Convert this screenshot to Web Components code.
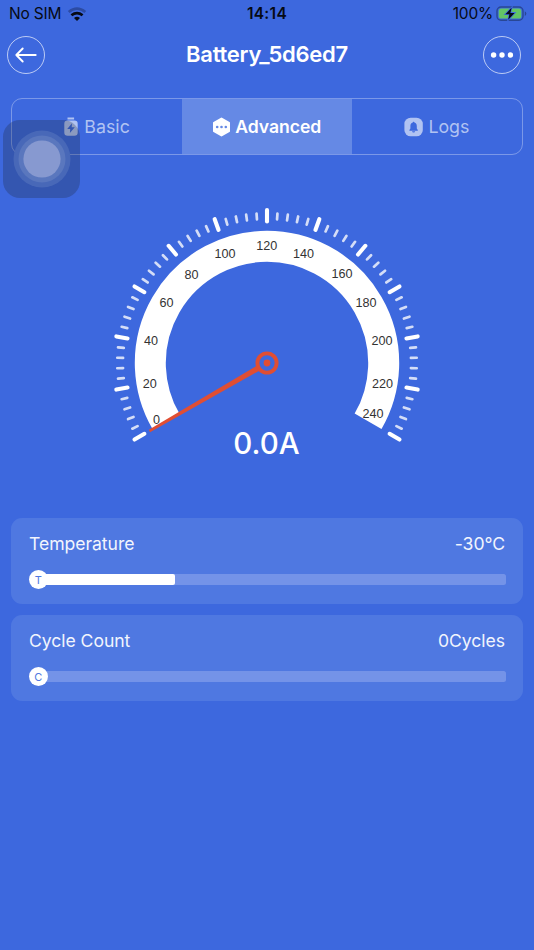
<!DOCTYPE html>
<html lang="en">
<head>
<meta charset="utf-8">
<title>Battery</title>
<style>
    html, body {
        margin: 0;
        height: 100%;
        background: #3d68de;
    }
    body {
        font-family: Inter, "Liberation Sans", sans-serif;
        color: #fff;
        overflow: hidden;
    }
</style>
</head>
<body>
<battery-page></battery-page>

<script>
function define(name, html, setup) {
    const template = document.createElement("template");
    template.innerHTML = html;
    customElements.define(name, class extends HTMLElement {
        constructor() {
            super();
            this.attachShadow({ mode: "open" });
            this.shadowRoot.appendChild(template.content.cloneNode(true));
        }
        connectedCallback() {
            if (setup) setup(this, this.shadowRoot);
        }
    });
}

define("status-bar", `
<style>
    :host {
        display: grid;
        grid-template-columns: 1fr auto 1fr;
        align-items: center;
        height: 28px;
        padding: 0 7px 0 9px;
        color: #060a14;
        font-size: 15.5px;
        line-height: 28px;
    }
    .left, .right { display: flex; align-items: center; }
    .left { gap: 6px; letter-spacing: -0.2px; }
    .right { justify-content: flex-end; gap: 3px; letter-spacing: -0.2px; }
    .time { position: relative; left: -1px; font-weight: 600; letter-spacing: 0.3px; }
    svg { display: block; }
</style>
<div class="left">
    <span>No SIM</span>
    <svg width="20" height="15" viewBox="0 0 20 15">
        <path d="M1.7 5Q10-1.8 18.3 5" fill="none" stroke="#2c4ba3" stroke-width="2.7"/>
        <path d="M4.4 8.3Q10 4 15.6 8.3" fill="none" stroke="#060a14" stroke-width="2.7"/>
        <path d="M7 10.9Q10 8.5 13 10.9L10 13.9z" fill="#060a14"/>
    </svg>
</div>
<span class="time">14:14</span>
<div class="right">
    <span>100%</span>
    <svg width="31" height="16" viewBox="0 0 31 16">
        <rect x="1" y="1" width="26" height="13.2" rx="4" fill="none" stroke="#284795" stroke-width="1.4"/>
        <path d="M28.8 5.2v4.8q1.5-.6 1.5-2.4t-1.5-2.4z" fill="#284795"/>
        <rect x="2.7" y="2.6" width="22.6" height="10" rx="2.6" fill="#63c466"/>
        <path d="M15.6 1.8L9.4 8.3h4l-1.2 5.5 6.4-6.9h-4.2z" fill="#060a14" stroke="#3d68de" stroke-width="1.6" paint-order="stroke"/>
    </svg>
</div>
`);

define("round-button", `
<style>
    :host {
        display: grid;
        place-items: center;
        box-sizing: border-box;
        width: 38px;
        height: 38px;
        border: 1px solid rgba(255, 255, 255, 0.65);
        border-radius: 50%;
    }
</style>
<slot></slot>
`);

define("nav-header", `
<style>
    :host {
        display: grid;
        grid-template-columns: 41px 1fr 41px;
        align-items: center;
        height: 53px;
        padding: 0 10px 0 7px;
    }
    h1 {
        margin: -2px 0 0 3px;
        font-size: 22px;
        font-weight: 600;
        letter-spacing: -0.25px;
        text-align: center;
    }
    svg { display: block; }
</style>
<round-button>
    <svg width="24" height="18" viewBox="0 0 24 18" fill="none" stroke="#fff" stroke-width="1.9" stroke-linecap="round" stroke-linejoin="round">
        <path d="M21.7 9H2.3M8.7 2.5L2.3 9l6.4 6.5"/>
    </svg>
</round-button>
<h1><slot></slot></h1>
<round-button>
    <svg width="24" height="6" viewBox="0 0 24 6" fill="#fff">
        <circle cx="3.6" cy="3" r="2.7"/><circle cx="12" cy="3" r="2.7"/><circle cx="20.4" cy="3" r="2.7"/>
    </svg>
</round-button>
`);

define("tab-item", `
<style>
    :host {
        display: flex;
        align-items: center;
        justify-content: center;
        gap: 5px;
        font-size: 17.8px;
        color: #b1c3f2;
    }
    :host([active]) {
        gap: 4px;
        background: #6589e5;
        color: #fff;
        font-size: 17.6px;
        font-weight: 600;
        letter-spacing: -0.05px;
    }
    span { margin-top: -1px; }
    ::slotted(svg) { display: block; }
</style>
<slot name="icon"></slot>
<span><slot></slot></span>
`);

define("tab-bar", `
<style>
    :host {
        display: grid;
        grid-template-columns: repeat(3, 1fr);
        box-sizing: border-box;
        height: 57px;
        margin: 17px 11px 0 10.5px;
        border: 1px solid rgba(255, 255, 255, 0.32);
        border-radius: 11px;
        overflow: hidden;
    }
</style>
<slot></slot>
`);

define("amp-gauge", `
<style>
    :host {
        display: block;
        width: 534px;
        height: 310px;
        margin-top: 45px;
    }
    svg { display: block; }
    .labels { font: 12.6px "Liberation Sans", sans-serif; fill: #333; text-anchor: middle; }
    .value { font-size: 29.5px; font-weight: 500; fill: #fff; text-anchor: middle; }
</style>
<svg width="534" height="310" viewBox="0 200 534 310">
    <g class="ticks" stroke="#fff" stroke-linecap="round"></g>
    <path class="ring" fill="none" stroke="#fff" stroke-width="31"/>
    <g class="labels"></g>
    <path d="M148.9 429.7L258 365l3.4-1.6 2.4 4.6-3.6 2.2L150 432.2z" fill="#e04e33"/>
    <circle cx="267" cy="363" r="9.6" fill="#3d68de" stroke="#e04e33" stroke-width="3.9"/>
    <circle cx="267" cy="363" r="3.4" fill="#e04e33"/>
    <text class="value" x="266.5" y="453.7"></text>
</svg>
`, (host, root) => {
    const cx = 267;
    const cy = 363;
    const point = (deg, r) => {
        const a = deg * Math.PI / 180;
        return (cx + Math.sin(a) * r).toFixed(2) + " " + (cy - Math.cos(a) * r).toFixed(2);
    };

    // a long tick every 20 degrees, four short ones between
    let ticks = "";
    for (let deg = -120; deg <= 120; deg += 4) {
        const major = deg % 20 === 0;
        const from = point(deg, major ? 141.6 : 144);
        const to = point(deg, major ? 153 : 149.8);
        ticks += `<path d="M${from}L${to}" stroke-width="${major ? 4.1 : 2.7}" opacity="${major ? 1 : 0.78}"/>`;
    }
    root.querySelector(".ticks").innerHTML = ticks;
    root.querySelector(".ring").setAttribute("d", `M${point(-120, 116.7)}A116.7 116.7 0 1 1 ${point(120, 116.7)}`);

    const labels = [
        [0, 156.5, 420], [20, 149.8, 384], [40, 151, 341], [60, 166.5, 303],
        [80, 191.5, 274.5], [100, 225, 254], [120, 266.7, 245.8], [140, 303.5, 253.5],
        [160, 342, 274], [180, 366, 302.5], [200, 382, 340.5], [220, 382.5, 383.8],
        [240, 373, 413.8]
    ];
    root.querySelector(".labels").innerHTML = labels
        .map(([n, x, y]) => `<text x="${x}" y="${y + 4.4}">${n}</text>`).join("");
    root.querySelector(".value").textContent = host.getAttribute("value");
});

define("stat-card", `
<style>
    :host {
        display: block;
        box-sizing: border-box;
        height: 86px;
        margin: 0 11px;
        padding: 13.5px 18px 0;
        border-radius: 11px;
        background: #4f78e1;
    }
    .row {
        display: flex;
        justify-content: space-between;
        font-size: 17.6px;
        line-height: 26px;
        letter-spacing: -0.05px;
        color: #f2f5fd;
    }
    .bar {
        display: flex;
        align-items: center;
        height: 20px;
        margin: 12.5px -0.5px 0;
    }
    .knob {
        flex: none;
        z-index: 1;
        width: 19.5px;
        height: 19.5px;
        border-radius: 50%;
        background: #fff;
        color: #4f78e1;
        font-size: 11px;
        line-height: 20px;
        text-align: center;
    }
    .track {
        flex: 1;
        height: 10.5px;
        margin-left: -10px;
        border-radius: 2.5px;
        background: #7493e8;
        overflow: hidden;
    }
    .fill {
        height: 100%;
        border-radius: 0 2px 2px 0;
        background: #fff;
    }
</style>
<div class="row"><span><slot></slot></span><span class="value"></span></div>
<div class="bar">
    <div class="knob"></div>
    <div class="track"><div class="fill"></div></div>
</div>
`, (host, root) => {
    root.querySelector(".value").textContent = host.getAttribute("value");
    root.querySelector(".knob").textContent = host.getAttribute("mark");
    root.querySelector(".fill").style.width = host.getAttribute("fill") + "%";
});

define("assistive-touch", `
<style>
    :host {
        position: absolute;
        left: 3px;
        top: 120px;
        display: grid;
        place-items: center;
        width: 77px;
        height: 77.5px;
        border-radius: 17px;
        background: rgba(28, 32, 40, 0.25);
    }
    svg { display: block; }
</style>
<svg width="58" height="58" viewBox="-29 -29 58 58">
    <circle r="28.5" fill="#4868b8"/>
    <circle r="23.5" fill="#5a77be"/>
    <circle r="18.6" fill="#8799d0"/>
</svg>
`);

define("battery-page", `
<style>
    :host { display: block; position: relative; width: 534px; height: 950px; }
    .cards { display: grid; gap: 11px; margin-top: 7.5px; }
</style>
<status-bar></status-bar>
<nav-header>Battery_5d6ed7</nav-header>
<tab-bar>
    <tab-item>
        <svg slot="icon" width="16" height="20" viewBox="0 0 16 20">
            <path d="M4.5.5h6.6v2H4.5zM4.6 3.6h6.8q3.3 0 3.3 3.3v8.6q0 3.3-3.3 3.3H4.6q-3.3 0-3.3-3.3V6.9q0-3.3 3.3-3.3z" fill="#b1c3f2"/>
            <path d="M9 6.3l-4.8 5.8h3L6.9 16l4.9-5.8H8.7z" fill="#3d68de"/>
        </svg>Basic
    </tab-item>
    <tab-item active>
        <svg slot="icon" width="19" height="20" viewBox="0 0 18 20">
            <path d="M9 1.5L16.5 5.8v8.4L9 18.5 1.5 14.2V5.8z" fill="#fff" stroke="#fff" stroke-width="2" stroke-linejoin="round"/>
            <g fill="#6589e5"><circle cx="4.7" cy="10" r="1.3"/><circle cx="9" cy="10" r="1.3"/><circle cx="13.3" cy="10" r="1.3"/></g>
        </svg>Advanced
    </tab-item>
    <tab-item>
        <svg slot="icon" width="19" height="20" viewBox="0 0 19 20">
            <rect x=".4" y=".7" width="18.4" height="18.6" rx="6.3" fill="#b1c3f2"/>
            <path d="M9.6 4.7c.6 0 .8.4.8.8 1.7.4 2.4 1.8 2.4 3.5v2.6l1 1.5v.6H5.4v-.6l1-1.5V9c0-1.7.7-3.1 2.4-3.5 0-.4.2-.8.8-.8zM8 14.3h3.2q-.2 1.2-1.6 1.2T8 14.3z" fill="#3d68de"/>
        </svg>Logs
    </tab-item>
</tab-bar>
<amp-gauge value="0.0A"></amp-gauge>
<div class="cards">
    <stat-card value="-30°C" mark="T" fill="29.2">Temperature</stat-card>
    <stat-card value="0Cycles" mark="C" fill="0">Cycle Count</stat-card>
</div>
<assistive-touch></assistive-touch>
`);
</script>
</body>
</html>
